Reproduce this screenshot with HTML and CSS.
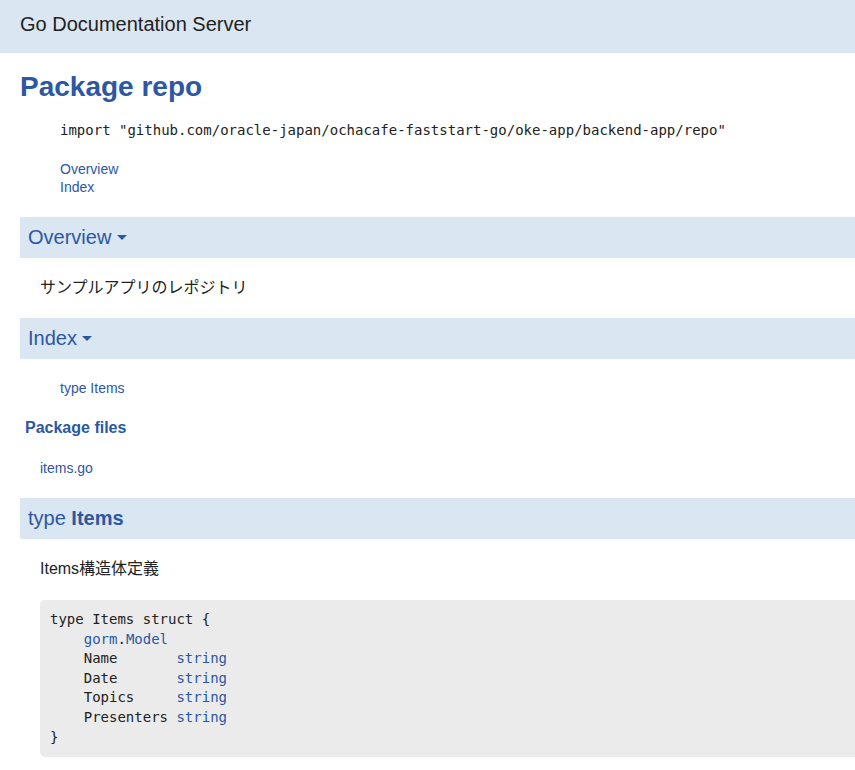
FILE: index.html
```
<!DOCTYPE html>
<html lang="ja">
<head>
<meta charset="utf-8">
<title>repo - Go Documentation Server</title>
<link rel="stylesheet" href="styles.css">
</head>
<body>
<div class="topbar">
  <div class="top-heading">Go Documentation Server</div>
</div>
<div class="page">
  <h1>Package repo</h1>
  <dl class="import">
    <dd><code>import "github.com/oracle-japan/ochacafe-faststart-go/oke-app/backend-app/repo"</code></dd>
  </dl>
  <dl>
    <dd><a href="#pkg-overview">Overview</a></dd>
    <dd><a href="#pkg-index">Index</a></dd>
  </dl>
  <h2 id="pkg-overview">Overview <svg class="caret" width="10" height="5" viewBox="0 0 10 5"><path d="M0 0H10L5 5Z"/></svg></h2>
  <p>サンプルアプリのレポジトリ</p>
  <h2 id="pkg-index">Index <svg class="caret" width="10" height="5" viewBox="0 0 10 5"><path d="M0 0H10L5 5Z"/></svg></h2>
  <dl>
    <dd><a href="#Items">type Items</a></dd>
  </dl>
  <h3>Package files</h3>
  <p class="files-row"><span class="files"><a href="#">items.go</a></span></p>
  <h2 id="Items" class="type-heading">type <a href="#">Items</a></h2>
  <p>Items構造体定義</p>
<pre>type Items struct {
    <a href="#">gorm</a>.<a href="#">Model</a>
    Name       <a href="#">string</a>
    Date       <a href="#">string</a>
    Topics     <a href="#">string</a>
    Presenters <a href="#">string</a>
}</pre>
</div>
</body>
</html>
```

FILE: styles.css
```
body {
  margin: 0;
  font-family: "Liberation Sans", Arial, "Noto Sans CJK JP", sans-serif;
  line-height: 1.3;
  color: #222;
  background: #fff;
}
a {
  color: #2c57a2;
  text-decoration: none;
}
.topbar {
  background: #dae6f2;
  height: 53px;
  padding: 0 20px;
  box-sizing: border-box;
}
.top-heading {
  padding-top: 11px;
  font-size: 20px;
}
.page {
  padding: 0 0 0 20px;
}
h1, h2, h3 {
  color: #2c57a2;
  font-weight: bold;
  margin: 20px 0;
  padding: 0;
}
h1 {
  font-size: 28px;
  line-height: 1;
}
h2 {
  font-size: 20px;
  line-height: 1.25;
  font-weight: normal;
  background: #dae6f2;
  padding: 8px;
}
h2 a {
  font-weight: bold;
}
h2.type-heading {
  margin-top: 19px;
}
h3 {
  font-size: 16px;
  padding-left: 5px;
}
.caret {
  fill: #2c57a2;
  vertical-align: 4px;
}
dl {
  margin: 20px;
  font-size: 14px;
}
dl.import {
  margin-bottom: 21px;
}
dd {
  margin: 0 0 0 20px;
}
p {
  margin: 20px;
  font-size: 16px;
}
p.files-row {
  margin-bottom: 19px;
}
.files {
  font-size: 14px;
}
code, pre {
  font-family: "DejaVu Sans Mono", Menlo, monospace;
  font-size: 14px;
}
pre {
  margin: 20px 0 20px 20px;
  padding: 10px;
  line-height: 1.4;
  background: #ebebeb;
  border-radius: 5px 0 0 5px;
}
```
